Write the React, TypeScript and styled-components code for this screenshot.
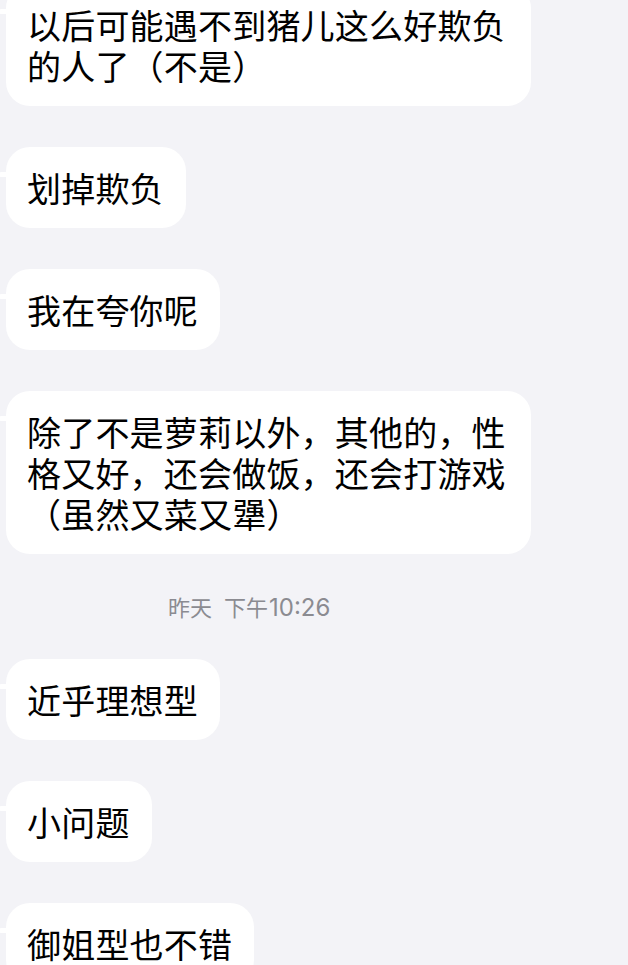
import React from "react";
import styled, { createGlobalStyle } from "styled-components";

const Global = createGlobalStyle`
  html, body {
    margin: 0;
    padding: 0;
    background: #f3f3f7;
    overflow: hidden;
  }
  body {
    font-family: "Noto Sans CJK SC", "Noto Sans", sans-serif;
  }
`;

const Thread = styled.div`
  display: flex;
  flex-direction: column;
  align-items: flex-start;
  gap: 41px;
  margin-top: -16px;
  padding-left: 6px;
  width: 628px;
  height: 1000px;
  box-sizing: border-box;
`;

const Bubble = styled.div`
  position: relative;
  background: #ffffff;
  border-radius: 24px;
  padding: 20px 22px 20px 21px;
  max-width: 525px;
  box-sizing: border-box;
  color: #000000;
  font-family: "Noto Sans CJK SC", sans-serif;
  font-size: 34px;
  line-height: 41px;
  letter-spacing: 0.2px;
  &::before {
    content: "";
    position: absolute;
    left: -7px;
    top: 25px;
    width: 12px;
    height: 5px;
    background: #ffffff;
    border-radius: 3px 0 0 3px;
  }
`;

const Stamp = styled.div`
  align-self: stretch;
  padding-left: 162px;
  height: 26px;
  margin: -2px 0 -1px;
  font-family: "Noto Sans CJK SC", sans-serif;
  font-size: 22px;
  line-height: 26px;
  color: #8b8b91;
  display: flex;
  align-items: baseline;
  gap: 12px;
`;

const Time = styled.span`
  font-family: "Inter", "Liberation Sans", sans-serif;
  font-size: 24px;
  margin-left: 1px;
`;

const messages1 = [
  "以后可能遇不到猪儿这么好欺负的人了（不是）",
  "划掉欺负",
  "我在夸你呢",
  "除了不是萝莉以外，其他的，性格又好，还会做饭，还会打游戏（虽然又菜又犟）",
];
const messages2 = ["近乎理想型", "小问题", "御姐型也不错"];

export default function App() {
  return (
    <>
      <Global />
      <Thread>
        {messages1.map((m) => (
          <Bubble key={m}>{m}</Bubble>
        ))}
        <Stamp>
          <span>昨天</span>
          <span>
            下午<Time>10:26</Time>
          </span>
        </Stamp>
        {messages2.map((m) => (
          <Bubble key={m}>{m}</Bubble>
        ))}
      </Thread>
    </>
  );
}
